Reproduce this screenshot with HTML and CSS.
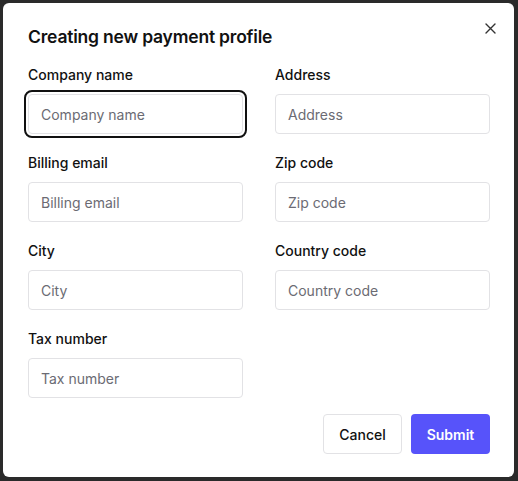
FILE: index.html
```html
<!DOCTYPE html>
<html lang="en">
<head>
<meta charset="utf-8">
<title>Creating new payment profile</title>
<link rel="stylesheet" href="styles.css">
</head>
<body>
<div class="modal">
  <div class="header">
    <h2 class="title">Creating new payment profile</h2>
    <button class="close" aria-label="Close">
      <svg width="11" height="11" viewBox="0 0 11 11"><path d="M1 1L10 10M10 1L1 10" stroke="#333" stroke-width="1.4" stroke-linecap="round"/></svg>
    </button>
  </div>
  <form class="grid">
    <div class="field">
      <label>Company name</label>
      <div class="input focused">Company name</div>
    </div>
    <div class="field">
      <label>Address</label>
      <div class="input">Address</div>
    </div>
    <div class="field">
      <label>Billing email</label>
      <div class="input">Billing email</div>
    </div>
    <div class="field">
      <label>Zip code</label>
      <div class="input">Zip code</div>
    </div>
    <div class="field">
      <label>City</label>
      <div class="input">City</div>
    </div>
    <div class="field">
      <label>Country code</label>
      <div class="input">Country code</div>
    </div>
    <div class="field">
      <label>Tax number</label>
      <div class="input">Tax number</div>
    </div>
  </form>
  <div class="actions">
    <button class="btn secondary">Cancel</button>
    <button class="btn primary">Submit</button>
  </div>
</div>
</body>
</html>
```
FILE: styles.css
```css
* { box-sizing: border-box; }
html, body { margin: 0; padding: 0; }
body {
  background: #2a2a2a;
  padding: 3px;
  font-family: Inter, "Noto Sans", sans-serif;
  color: #111;
}
.modal {
  width: 511px;
  height: 474px;
  background: #fff;
  border-radius: 6px;
  padding: 20px 24px 0 25px;
}
.header {
  display: flex;
  justify-content: space-between;
  align-items: flex-start;
  height: 28px;
}
.title {
  margin: 0;
  font-size: 17.5px;
  font-weight: 600;
  line-height: 28px;
  letter-spacing: -0.2px;
}
.close {
  border: 0;
  background: none;
  padding: 0;
  margin: -7px -12px 0 0;
  width: 24px;
  height: 24px;
  display: flex;
  align-items: center;
  justify-content: center;
}
.grid {
  margin-top: 14px;
  display: grid;
  grid-template-columns: 215px 215px;
  column-gap: 32px;
  row-gap: 19px;
}
.field {
  display: flex;
  flex-direction: column;
  gap: 9px;
}
.field label {
  font-size: 14px;
  font-weight: 500;
  line-height: 20px;
  height: 20px;
}
.input {
  height: 40px;
  border: 1px solid #e2e2e5;
  border-radius: 4px;
  padding: 0 12px;
  display: flex;
  align-items: center;
  font-size: 14px;
  color: #6b6b73;
}
.input.focused {
  outline: 2px solid #111;
  outline-offset: 2px;
}
.actions {
  margin-top: 16px;
  display: flex;
  justify-content: flex-end;
  gap: 9px;
}
.btn {
  width: 79px;
  height: 40px;
  border-radius: 4px;
  font-family: Inter, "Noto Sans", sans-serif;
  font-size: 14px;
  font-weight: 500;
}
.secondary {
  background: #fff;
  border: 1px solid #e2e2e5;
  color: #111;
}
.primary {
  background: #5753fa;
  border: 0;
  color: #fff;
  font-weight: 600;
}
```
